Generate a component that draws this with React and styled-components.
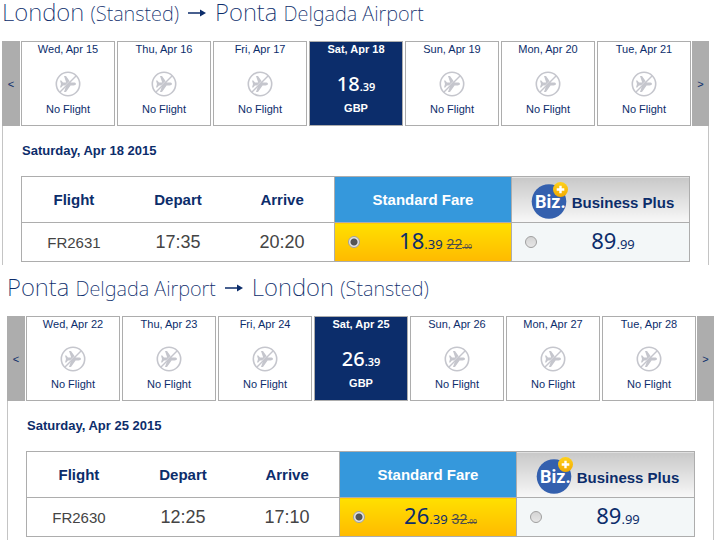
import React, { useState } from 'react'
import styled, { createGlobalStyle } from 'styled-components'

const NAVY = '#0c2d6b'
const BORDER = '#adadad'

const GlobalStyle = createGlobalStyle`
  * {
    box-sizing: border-box;
  }

  body {
    margin: 0;
    background: white;
    color: ${NAVY};
    font-family: 'Liberation Sans', Arial, sans-serif;
    font-size: 11px;
  }
`

const Page = styled.main`
  display: flex;
  flex-direction: column;
  gap: 10px;
`

const Journey = styled.section`
  padding: 0 ${({ $inset }) => ($inset ? '5px 0 7px' : '10px 0 2px')};
`

const RouteTitle = styled.h2`
  display: flex;
  align-items: baseline;
  height: 41px;
  margin: 0;
  font-family: 'Noto Sans', 'Open Sans', sans-serif;
  font-size: 24px;
  font-weight: 200;
  line-height: 24px;
  white-space: pre;
`

const RouteDetail = styled.span`
  font-size: 20px;
`

const ArrowIcon = styled.svg`
  width: 18px;
  height: 12px;
  margin: 0 9px;
`

const DateStrip = styled.nav`
  display: flex;
  gap: 1px;
  height: 85px;
`

const NavButton = styled.button`
  flex: 0 0 ${({ $width }) => $width}px;
  padding: 0;
  border: 0;
  background: ${BORDER};
  color: ${NAVY};
  font-family: inherit;
  font-size: 11px;
  cursor: pointer;
`

const Days = styled.div`
  display: flex;
  flex: 1;
  gap: 2px;
`

const DayButton = styled.button`
  display: flex;
  flex: 1 1 0;
  flex-direction: column;
  align-items: center;
  padding: 0;
  border: 1px solid ${BORDER};
  background: ${({ $selected }) => ($selected ? NAVY : 'white')};
  color: ${({ $selected }) => ($selected ? 'white' : NAVY)};
  font-family: inherit;
  font-size: 11px;
  font-weight: ${({ $selected }) => ($selected ? 'bold' : 'normal')};
  line-height: 15px;
  cursor: pointer;
`

const DayBody = styled.span`
  display: flex;
  align-items: center;
  height: ${({ $selected }) => ($selected ? 44 : 45)}px;
  padding-top: ${({ $selected }) => ($selected ? 12 : 8)}px;
`

const NoFlightSvg = styled.svg`
  width: 26px;
  height: 26px;
`

const Price = styled.span`
  font-family: 'Noto Sans', 'Open Sans', sans-serif;
  font-size: ${({ $small }) => ($small ? 20 : 22)}px;
  font-weight: ${({ $small }) => ($small ? 500 : 400)};
  line-height: 30px;
`

const Pence = styled.span`
  font-size: ${({ $small }) => ($small ? 11 : 13)}px;
  font-weight: ${({ $small }) => ($small ? 600 : 400)};
`

const OldPrice = styled.s`
  margin-left: 4px;
  color: #4d4d4d;
  font-size: 14px;
`

const OldPence = styled.span`
  display: inline-block;
  font-size: 7px;
  text-decoration: line-through;
`

const Details = styled.div`
  padding: 17px 18px 3px;
  border: solid #c4c4c4;
  border-width: 0 1px;
`

const SelectedDate = styled.h3`
  margin: 0 0 18px 1px;
  font-size: 13px;
  font-weight: bold;
  line-height: 15px;
`

const FareTable = styled.table`
  width: 100%;
  border-collapse: collapse;
  table-layout: fixed;
  text-align: center;
`

const Col = styled.col`
  width: ${({ $width }) => $width};
`

const HeadCell = styled.th`
  height: 46px;
  padding: 0;
  border: 1px solid ${BORDER};
  border-width: 1px 0;
  font-size: 15px;

  &:first-child {
    border-left-width: 1px;
  }
`

const StandardHead = styled(HeadCell)`
  border-width: 1px;
  background: #3598dc;
  color: white;
`

const BusinessHead = styled(HeadCell)`
  border-width: 1px;
  background: linear-gradient(#c8c8c8, #f8f8f8);
`

const BusinessTitle = styled.span`
  display: flex;
  align-items: center;
  justify-content: center;
  gap: 3px;
  padding-left: 4px;
  line-height: 17px;
`

const BizSvg = styled.svg`
  width: 38px;
  height: 38px;
`

const BusinessName = styled.span`
  padding-top: 5px;
`

const Cell = styled.td`
  height: 39px;
  padding: 0;
  border: 1px solid ${BORDER};
  border-width: 1px 0;
  color: #444;
  font-size: ${({ $time }) => ($time ? 18 : 15)}px;

  &:first-child {
    border-left-width: 1px;
  }
`

const FareCell = styled.td`
  padding: 0;
  border: 1px solid ${BORDER};
  background: ${({ $selected }) => ($selected ? 'linear-gradient(#ffe000, #ffba00)' : '#f3f7f8')};
`

const FareLabel = styled.label`
  display: flex;
  align-items: center;
  padding-left: 13px;
  cursor: pointer;
`

const FareRadio = styled.input`
  flex: none;
  width: 12px;
  height: 12px;
  margin: 0;
  appearance: none;
  border: 1px solid #a0a0a0;
  border-radius: 50%;
  background: linear-gradient(#d4d4d4, #e6e6e6);

  &:checked {
    background: radial-gradient(circle, #555 0 3px, #e4e4e4 4px);
  }
`

const FareAmount = styled.span`
  flex: 1;
`

const NoFlightIcon = () => (
  <NoFlightSvg viewBox="0 0 26 26" fill="none" aria-hidden="true">
    <path
      d="M21 13C21 12.1 19.8 11.6 18.6 11.6L15.6 11.6L11 5H9L11.2 11.6H8L6.3 9.6H5L6 13L5 16.4H6.3L8 14.4H11.2L9 21H11L15.6 14.4L18.6 14.4C19.8 14.4 21 13.9 21 13Z"
      fill="#c5c6cd"
    />
    <path d="M4.4 20.4L20.4 4.4" stroke="white" strokeWidth="0.6" />
    <path d="M5 21L21 5" stroke="#c5c6cd" strokeWidth="1.5" />
    <circle cx="13" cy="13" r="11.7" stroke="#c5c6cd" strokeWidth="1.6" />
  </NoFlightSvg>
)

const BizLogo = () => (
  <BizSvg viewBox="0 0 38 38" aria-hidden="true">
    <defs>
      <linearGradient id="plusGold" x1="0" y1="0" x2="0" y2="1">
        <stop offset="0" stopColor="#ffd21c" />
        <stop offset="1" stopColor="#f2a900" />
      </linearGradient>
    </defs>
    <circle cx="18" cy="20.5" r="17.3" fill="#3460ae" />
    <text x="4" y="27" fill="white" fontFamily="Roboto, sans-serif" fontSize="18" fontWeight="bold">
      Biz.
    </text>
    <circle cx="29.5" cy="8.5" r="7.5" fill="url(#plusGold)" />
    <path d="M29.5 4.7V12.3M25.7 8.5H33.3" stroke="white" strokeWidth="2.4" />
  </BizSvg>
)

const Arrow = () => (
  <ArrowIcon viewBox="0 0 18 12" aria-hidden="true">
    <path d="M0 3.2H12V0.5L18 4L12 7.5V4.8H0Z" fill={NAVY} />
  </ArrowIcon>
)

const LONDON = { city: 'London ', detail: '(Stansted)' }
const PONTA = { city: 'Ponta ', detail: 'Delgada Airport' }

const journeys = [
  {
    from: LONDON,
    to: PONTA,
    days: ['Wed, Apr 15', 'Thu, Apr 16', 'Fri, Apr 17', 'Sat, Apr 18', 'Sun, Apr 19', 'Mon, Apr 20', 'Tue, Apr 21'],
    date: 'Saturday, Apr 18 2015',
    flight: 'FR2631',
    depart: '17:35',
    arrive: '20:20',
    price: ['18', '.39'],
    oldPrice: ['22', '.00']
  },
  {
    from: PONTA,
    to: LONDON,
    days: ['Wed, Apr 22', 'Thu, Apr 23', 'Fri, Apr 24', 'Sat, Apr 25', 'Sun, Apr 26', 'Mon, Apr 27', 'Tue, Apr 28'],
    date: 'Saturday, Apr 25 2015',
    flight: 'FR2630',
    depart: '12:25',
    arrive: '17:10',
    price: ['26', '.39'],
    oldPrice: ['32', '.00']
  }
]

const SELECTED_DAY = 3

const JourneySection = ({ journey, inset }) => {
  const [fare, setFare] = useState('standard')
  const { from, to, days, date, flight, depart, arrive, price, oldPrice } = journey

  return (
    <Journey $inset={inset}>
      <RouteTitle>
        <span>{from.city}<RouteDetail>{from.detail}</RouteDetail></span>
        <Arrow />
        <span>{to.city}<RouteDetail>{to.detail}</RouteDetail></span>
      </RouteTitle>

      <DateStrip>
        <NavButton type="button" $width={18} aria-label="Earlier dates">&lt;</NavButton>
        <Days>
          {days.map((day, i) => (
            <DayButton key={day} type="button" $selected={i === SELECTED_DAY}>
              {day}
              <DayBody $selected={i === SELECTED_DAY}>
                {i === SELECTED_DAY ? (
                  <Price $small>{price[0]}<Pence $small>{price[1]}</Pence></Price>
                ) : (
                  <NoFlightIcon />
                )}
              </DayBody>
              {i === SELECTED_DAY ? 'GBP' : 'No Flight'}
            </DayButton>
          ))}
        </Days>
        <NavButton type="button" $width={17} aria-label="Later dates">&gt;</NavButton>
      </DateStrip>

      <Details>
        <SelectedDate>{date}</SelectedDate>
        <FareTable>
          <colgroup>
            <Col />
            <Col />
            <Col />
            <Col $width="177px" />
            <Col $width="178px" />
          </colgroup>
          <thead>
            <tr>
              <HeadCell>Flight</HeadCell>
              <HeadCell>Depart</HeadCell>
              <HeadCell>Arrive</HeadCell>
              <StandardHead>Standard Fare</StandardHead>
              <BusinessHead>
                <BusinessTitle>
                  <BizLogo />
                  <BusinessName>Business Plus</BusinessName>
                </BusinessTitle>
              </BusinessHead>
            </tr>
          </thead>
          <tbody>
            <tr>
              <Cell>{flight}</Cell>
              <Cell $time>{depart}</Cell>
              <Cell $time>{arrive}</Cell>
              <FareCell $selected>
                <FareLabel>
                  <FareRadio
                    type="radio"
                    name={flight}
                    checked={fare === 'standard'}
                    onChange={() => setFare('standard')}
                  />
                  <FareAmount>
                    <Price>{price[0]}<Pence>{price[1]}</Pence></Price>
                    <OldPrice>{oldPrice[0]}<OldPence>{oldPrice[1]}</OldPence></OldPrice>
                  </FareAmount>
                </FareLabel>
              </FareCell>
              <FareCell>
                <FareLabel>
                  <FareRadio
                    type="radio"
                    name={flight}
                    checked={fare === 'business'}
                    onChange={() => setFare('business')}
                  />
                  <FareAmount>
                    <Price>89<Pence>.99</Pence></Price>
                  </FareAmount>
                </FareLabel>
              </FareCell>
            </tr>
          </tbody>
        </FareTable>
      </Details>
    </Journey>
  )
}

const App = () => (
  <Page>
    <GlobalStyle />
    {journeys.map((journey, i) => (
      <JourneySection key={journey.flight} journey={journey} inset={i > 0} />
    ))}
  </Page>
)

export { App as default }
